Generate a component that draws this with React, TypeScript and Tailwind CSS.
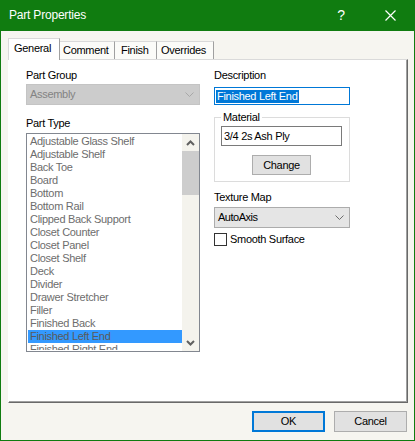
import React from 'react';

const partTypes = [
  'Adjustable Glass Shelf',
  'Adjustable Shelf',
  'Back Toe',
  'Board',
  'Bottom',
  'Bottom Rail',
  'Clipped Back Support',
  'Closet Counter',
  'Closet Panel',
  'Closet Shelf',
  'Deck',
  'Divider',
  'Drawer Stretcher',
  'Filler',
  'Finished Back',
  'Finished Left End',
  'Finished Right End',
];

const tabs = ['General', 'Comment', 'Finish', 'Overrides'];

function Chevron({ color = '#6d6d6d' }: { color?: string }) {
  return (
    <svg width="9" height="5" viewBox="0 0 9 5" className="shrink-0">
      <polyline points="0.5,0.5 4.5,4.5 8.5,0.5" fill="none" stroke={color} strokeWidth="1" />
    </svg>
  );
}

function ScrollArrow({ up }: { up?: boolean }) {
  return (
    <div className="h-[17px] flex items-center justify-center">
      <svg width="9" height="6" viewBox="0 0 9 6">
        <polyline
          points={up ? '1,5 4.5,1.5 8,5' : '1,1 4.5,4.5 8,1'}
          fill="none"
          stroke="#606060"
          strokeWidth="2"
        />
      </svg>
    </div>
  );
}

export default function App() {
  return (
    <div className="w-[415px] h-[441px] bg-[#107c10] flex flex-col font-['Liberation_Sans',Arial,sans-serif] text-[11px] tracking-[-0.3px] text-black leading-[13px]">
      {/* Title bar */}
      <div className="h-[31px] shrink-0 flex items-center text-white">
        <span className="ml-[9px] text-[12px] tracking-[-0.2px] flex-1">Part Properties</span>
        <span className="text-[14px] w-[14px] mr-[37px] text-center">?</span>
        <svg width="11" height="11" viewBox="0 0 11 11" className="mr-[19px]">
          <path d="M0.5 0.5 L10.5 10.5 M10.5 0.5 L0.5 10.5" stroke="#ffffff" strokeWidth="1.2" />
        </svg>
      </div>

      {/* Body */}
      <div className="mx-[1px] mb-[1px] flex-1 bg-[#f6f5f0] flex flex-col pt-[7px] pl-[7px] pr-[6px]">
        {/* Tabs */}
        <div className="h-[21px] flex items-end">
          {tabs.map((t, i) =>
            i === 0 ? (
              <div
                key={t}
                className="relative z-10 h-[22px] -mb-[1px] w-[52px] bg-white border-t border-l border-r border-[#d9d9d9] border-r-[#a0a0a0] pl-[5px] pt-[3px]"
              >
                {t}
              </div>
            ) : (
              <div
                key={t}
                className={`h-[18px] bg-[#fbfbf8] border-t border-r border-[#d9d9d9] border-r-[#a0a0a0] pt-[2px] ${
                  i === 1 ? 'w-[55px] pl-[3px]' : i === 2 ? 'w-[42px] pl-[6px]' : 'w-[57px] pl-[4px]'
                }`}
              >
                {t}
              </div>
            )
          )}
        </div>

        {/* Tab panel */}
        <div className="w-[400px] h-[344px] bg-white border-t border-l border-[#dadada] border-l-white border-r border-b border-r-[#696969] border-b-[#696969] shadow-[inset_-1px_-1px_0_#a0a0a0] pt-[9px] pl-[17px] flex gap-[14px]">
          {/* Left column */}
          <div className="w-[174px] flex flex-col">
            <div className="h-[13px]">Part Group</div>
            <div className="mt-[2px] h-[21px] bg-[#cccccc] border border-[#c4c4c4] flex items-center pl-[3px] pr-[5px] text-[#838383]">
              <span className="flex-1">Assembly</span>
              <Chevron color="#a8a8a8" />
            </div>
            <div className="mt-[12px] h-[13px]">Part Type</div>
            <div className="mt-[3px] h-[219px] border border-[#828790] flex p-[1px] pr-0 overflow-hidden">
              <div className="flex-1 overflow-hidden">
                {partTypes.map((p, i) => (
                  <div
                    key={p}
                    className={`h-[13px] pl-[2px] whitespace-nowrap leading-[13px] ${
                      i === 15 ? 'bg-[#3399ff] text-[#5a5a5a]' : 'text-[#6d6d6d]'
                    }`}
                  >
                    {p}
                  </div>
                ))}
              </div>
              <div className="w-[17px] bg-[#f4f3ed] flex flex-col -mt-[1px] -mb-[1px]">
                <ScrollArrow up />
                <div className="h-[44px] bg-[#cdcdcd]" />
                <div className="flex-1" />
                <ScrollArrow />
              </div>
            </div>
          </div>

          {/* Right column */}
          <div className="w-[136px] flex flex-col">
            <div className="h-[13px]">Description</div>
            <div className="mt-[5px] h-[18px] border border-[#0078d7] bg-white flex items-center pl-[1px]">
              <span className="bg-[#0078d7] text-white leading-[13px] pl-[1px] pr-[1px]">Finished Left End</span>
            </div>

            <div className="relative mt-[12px] h-[65px] border border-[#dcdcdc] flex flex-col items-start">
              <span className="absolute left-[6px] -top-[7px] bg-white px-[2px]">Material</span>
              <div className="mt-[8px] ml-[6px] w-[121px] h-[20px] border border-[#7a7a7a] bg-white flex items-center pl-[2px]">
                3/4 2s Ash Ply
              </div>
              <div className="mt-[9px] ml-[37px] w-[59px] h-[20px] bg-[#e1e1e1] border border-[#adadad] flex items-center justify-center">
                Change
              </div>
            </div>

            <div className="mt-[9px] h-[13px]">Texture Map</div>
            <div className="mt-[3px] h-[21px] bg-[#e5e5e5] border border-[#acacac] flex items-center pl-[3px] pr-[5px]">
              <span className="flex-1 tracking-[-0.5px]">AutoAxis</span>
              <Chevron />
            </div>
            <div className="mt-[5px] flex items-center">
              <div className="w-[13px] h-[13px] border border-[#333333] bg-white" />
              <span className="ml-[3px]">Smooth Surface</span>
            </div>
          </div>
        </div>

        {/* Buttons */}
        <div className="mt-[8px] h-[21px] flex justify-end gap-[9px] pr-[1px]">
          <div className="w-[73px] h-[21px] bg-[#e1e1e1] border-2 border-[#0078d7] flex items-center justify-center">
            OK
          </div>
          <div className="w-[73px] h-[21px] bg-[#e1e1e1] border border-[#adadad] flex items-center justify-center">
            Cancel
          </div>
        </div>
      </div>
    </div>
  );
}
